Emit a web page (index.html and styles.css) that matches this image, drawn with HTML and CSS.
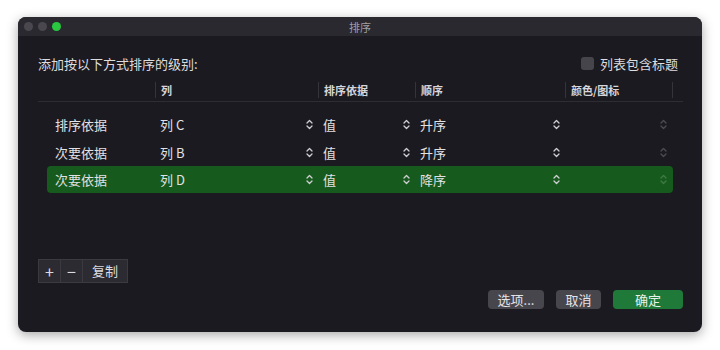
FILE: index.html
```html
<!DOCTYPE html>
<html lang="zh-CN">
<head>
    <meta charset="UTF-8">
    <title>排序</title>
    <link rel="stylesheet" href="styles.css">
</head>
<body>
    <div class="window">
        <div class="titlebar">
            <div class="lights">
                <span class="light"></span>
                <span class="light"></span>
                <span class="light green"></span>
            </div>
            <div class="title">排序</div>
        </div>
        <div class="content">
            <div class="top-line">
                <span class="intro">添加按以下方式排序的级别:</span>
                <label class="check"><span class="box"></span>列表包含标题</label>
            </div>
            <div class="table">
                <div class="head">
                    <div class="hcell"></div>
                    <div class="hcell sep">列</div>
                    <div class="hcell sep">排序依据</div>
                    <div class="hcell sep">顺序</div>
                    <div class="hcell sep">颜色/图标</div>
                    <div class="hcell sep"></div>
                </div>
                <div class="rows">
                    <div class="row">
                        <div class="cell">排序依据</div>
                        <div class="cell pop">列 C<svg class="chev" viewBox="0 0 7 11"><path d="M1 4 L3.5 1.5 L6 4 M1 7 L3.5 9.5 L6 7"/></svg></div>
                        <div class="cell pop">值<svg class="chev" viewBox="0 0 7 11"><path d="M1 4 L3.5 1.5 L6 4 M1 7 L3.5 9.5 L6 7"/></svg></div>
                        <div class="cell pop">升序<svg class="chev" viewBox="0 0 7 11"><path d="M1 4 L3.5 1.5 L6 4 M1 7 L3.5 9.5 L6 7"/></svg></div>
                        <div class="cell pop"><svg class="chev faint" viewBox="0 0 7 11"><path d="M1 4 L3.5 1.5 L6 4 M1 7 L3.5 9.5 L6 7"/></svg></div>
                    </div>
                    <div class="row">
                        <div class="cell">次要依据</div>
                        <div class="cell pop">列 B<svg class="chev" viewBox="0 0 7 11"><path d="M1 4 L3.5 1.5 L6 4 M1 7 L3.5 9.5 L6 7"/></svg></div>
                        <div class="cell pop">值<svg class="chev" viewBox="0 0 7 11"><path d="M1 4 L3.5 1.5 L6 4 M1 7 L3.5 9.5 L6 7"/></svg></div>
                        <div class="cell pop">升序<svg class="chev" viewBox="0 0 7 11"><path d="M1 4 L3.5 1.5 L6 4 M1 7 L3.5 9.5 L6 7"/></svg></div>
                        <div class="cell pop"><svg class="chev faint" viewBox="0 0 7 11"><path d="M1 4 L3.5 1.5 L6 4 M1 7 L3.5 9.5 L6 7"/></svg></div>
                    </div>
                    <div class="row selected">
                        <div class="cell">次要依据</div>
                        <div class="cell pop">列 D<svg class="chev" viewBox="0 0 7 11"><path d="M1 4 L3.5 1.5 L6 4 M1 7 L3.5 9.5 L6 7"/></svg></div>
                        <div class="cell pop">值<svg class="chev" viewBox="0 0 7 11"><path d="M1 4 L3.5 1.5 L6 4 M1 7 L3.5 9.5 L6 7"/></svg></div>
                        <div class="cell pop">降序<svg class="chev" viewBox="0 0 7 11"><path d="M1 4 L3.5 1.5 L6 4 M1 7 L3.5 9.5 L6 7"/></svg></div>
                        <div class="cell pop"><svg class="chev faint" viewBox="0 0 7 11"><path d="M1 4 L3.5 1.5 L6 4 M1 7 L3.5 9.5 L6 7"/></svg></div>
                    </div>
                </div>
            </div>
            <div class="edit-group">
                <button class="seg">+</button>
                <button class="seg">−</button>
                <button class="seg wide">复制</button>
            </div>
            <div class="actions">
                <button class="btn options">选项...</button>
                <button class="btn cancel">取消</button>
                <button class="btn primary">确定</button>
            </div>
        </div>
    </div>
</body>
</html>
```

FILE: styles.css
```css
* {
    margin: 0;
    padding: 0;
    box-sizing: border-box;
    font-family: "Noto Sans CJK SC", "Liberation Sans", sans-serif;
}

body {
    background: #ffffff;
    width: 720px;
    height: 350px;
    padding: 17px 18px 0 18px;
}

.window {
    width: 684px;
    height: 315px;
    background-color: #1c1a21;
    border-radius: 8px;
    box-shadow: 0 3px 12px rgba(0, 0, 0, 0.35);
    overflow: hidden;
    display: flex;
    flex-direction: column;
}

.titlebar {
    height: 19px;
    background-color: #2b2930;
    display: flex;
    align-items: center;
    position: relative;
}

.lights {
    display: flex;
    gap: 5px;
    padding-left: 6px;
}

.light {
    width: 9px;
    height: 9px;
    border-radius: 50%;
    background-color: #4a484e;
}

.light.green {
    background-color: #2ac840;
}

.title {
    position: absolute;
    left: 0;
    right: 0;
    text-align: center;
    font-size: 11px;
    color: #a09fa3;
}

.content {
    flex: 1;
    padding: 0 19px 0 20px;
    display: flex;
    flex-direction: column;
}

.top-line {
    display: flex;
    justify-content: space-between;
    align-items: center;
    margin-top: 19px;
    height: 16px;
}

.intro {
    font-size: 13px;
    color: #dddcdf;
}

.check {
    display: flex;
    align-items: center;
    gap: 6px;
    font-size: 13px;
    color: #dddcdf;
    margin-right: 5px;
}

.box {
    width: 13px;
    height: 13px;
    border-radius: 3px;
    background-color: #47454c;
}

.head {
    display: grid;
    grid-template-columns: 117px 163px 97px 150px 107px 11px;
    height: 21px;
    margin-top: 10px;
    border-bottom: 1px solid #2f2d34;
    align-items: start;
}

.hcell {
    height: 16px;
    margin-top: 1px;
    font-size: 11px;
    font-weight: bold;
    color: #d6d5d9;
    line-height: 16px;
    padding-left: 5px;
}

.hcell.sep {
    border-left: 1px solid #36343b;
}

.rows {
    margin: 9px 10px 0 9px;
    display: flex;
    flex-direction: column;
}

.row {
    display: grid;
    grid-template-columns: 108px 163px 97px 150px 107px;
    height: 27.5px;
    align-items: center;
    border-radius: 4px;
    font-size: 13px;
    color: #e2e1e4;
}

.row.selected {
    background-color: #165b1d;
    height: 27px;
}

.cell {
    padding-left: 8px;
}

.cell.pop {
    display: flex;
    align-items: center;
    padding-left: 5px;
    padding-right: 5px;
}

.chev {
    width: 7px;
    height: 11px;
    margin-left: auto;
    fill: none;
    stroke: #cfced2;
    stroke-width: 1.3;
    stroke-linecap: round;
    stroke-linejoin: round;
}

.chev.faint {
    stroke: #4e4c53;
}

.row.selected .chev.faint {
    stroke: #3f7a44;
}

.edit-group {
    display: flex;
    margin-top: 66px;
    width: 90px;
    height: 24px;
    border: 1px solid #3c3a41;
    background-color: #2d2b32;
}

.seg {
    border: none;
    background: none;
    color: #dcdbe0;
    font-size: 16px;
    width: 22px;
    border-right: 1px solid #3c3a41;
    line-height: 22px;
}

.seg.wide {
    width: 44px;
    border-right: none;
    font-size: 13px;
}

.actions {
    display: flex;
    justify-content: flex-end;
    gap: 12px;
    margin-top: 7px;
}

.btn {
    height: 19px;
    border: none;
    border-radius: 4px;
    background-color: #48464d;
    color: #e4e3e7;
    font-size: 13px;
    line-height: 19px;
}

.btn.options {
    width: 56px;
}

.btn.cancel {
    width: 45px;
}

.btn.primary {
    width: 70px;
    background-color: #1f7a3a;
    color: #e8f2ea;
}
```
